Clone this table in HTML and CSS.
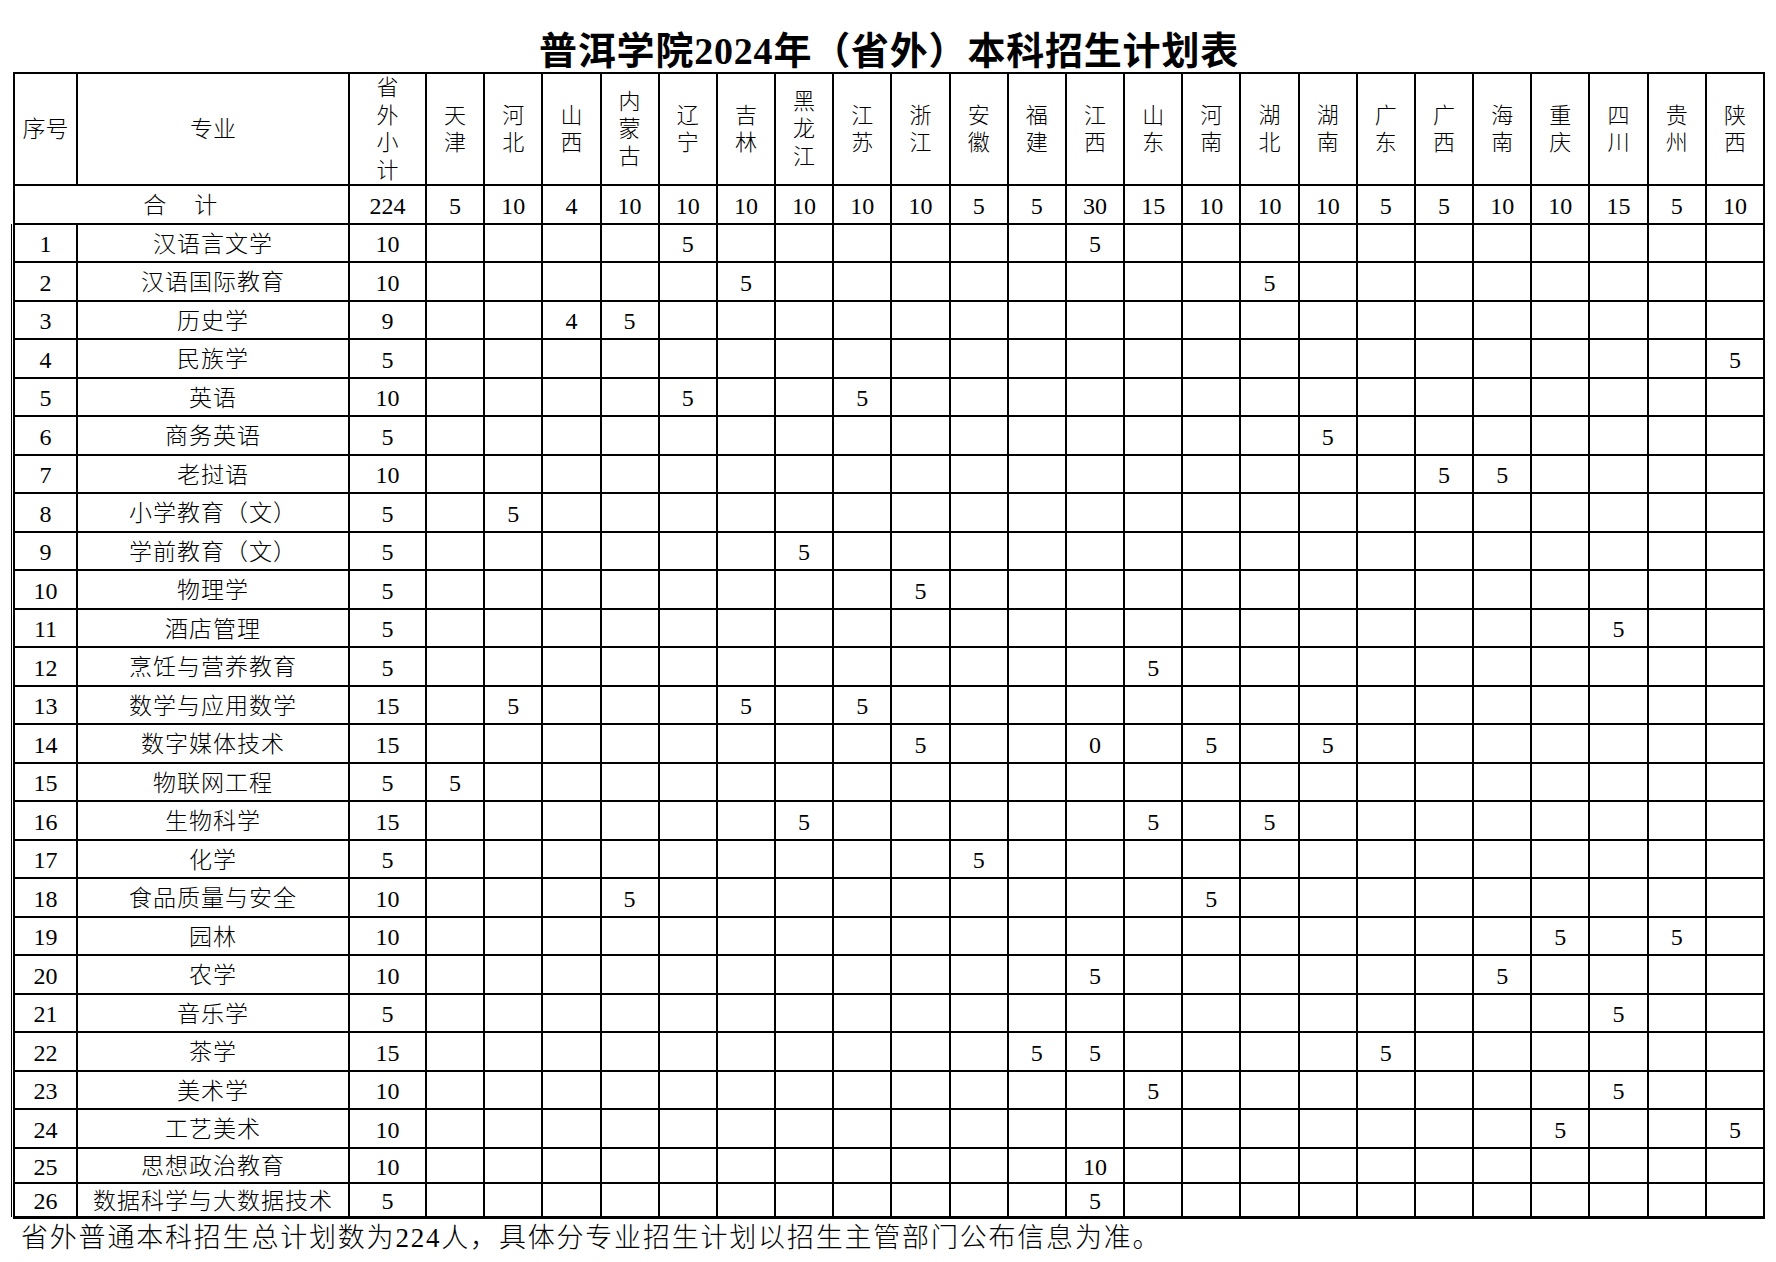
FILE: index.html
```html
<!DOCTYPE html>
<html lang="zh-CN">
<head>
<meta charset="utf-8">
<title>普洱学院2024年（省外）本科招生计划表</title>
<link rel="stylesheet" href="styles.css">
</head>
<body>
<div class="page">
  <h1 class="title">普洱学院2024年（省外）本科招生计划表</h1>
  <table class="plan">
    <colgroup>
      <col class="c-idx"><col class="c-major"><col class="c-sub">
      <col><col><col><col><col><col><col><col><col><col><col><col><col><col><col><col><col><col><col><col><col><col><col>
    </colgroup>
    <thead>
      <tr class="head">
        <th>序号</th>
        <th>专业</th>
        <th><span class="v">省外小计</span></th>
        <th><span class="v">天津</span></th>
        <th><span class="v">河北</span></th>
        <th><span class="v">山西</span></th>
        <th><span class="v">内蒙古</span></th>
        <th><span class="v">辽宁</span></th>
        <th><span class="v">吉林</span></th>
        <th><span class="v">黑龙江</span></th>
        <th><span class="v">江苏</span></th>
        <th><span class="v">浙江</span></th>
        <th><span class="v">安徽</span></th>
        <th><span class="v">福建</span></th>
        <th><span class="v">江西</span></th>
        <th><span class="v">山东</span></th>
        <th><span class="v">河南</span></th>
        <th><span class="v">湖北</span></th>
        <th><span class="v">湖南</span></th>
        <th><span class="v">广东</span></th>
        <th><span class="v">广西</span></th>
        <th><span class="v">海南</span></th>
        <th><span class="v">重庆</span></th>
        <th><span class="v">四川</span></th>
        <th><span class="v">贵州</span></th>
        <th><span class="v">陕西</span></th>
      </tr>
      <tr class="total">
        <td colspan="2" class="sum">合　计</td>
        <td>224</td><td>5</td><td>10</td><td>4</td><td>10</td><td>10</td><td>10</td><td>10</td><td>10</td><td>10</td><td>5</td><td>5</td><td>30</td><td>15</td><td>10</td><td>10</td><td>10</td><td>5</td><td>5</td><td>10</td><td>10</td><td>15</td><td>5</td><td>10</td>
      </tr>
    </thead>
    <tbody>
      <tr><td>1</td><td class="zh">汉语言文学</td><td>10</td><td></td><td></td><td></td><td></td><td>5</td><td></td><td></td><td></td><td></td><td></td><td></td><td>5</td><td></td><td></td><td></td><td></td><td></td><td></td><td></td><td></td><td></td><td></td><td></td></tr>
      <tr><td>2</td><td class="zh">汉语国际教育</td><td>10</td><td></td><td></td><td></td><td></td><td></td><td>5</td><td></td><td></td><td></td><td></td><td></td><td></td><td></td><td></td><td>5</td><td></td><td></td><td></td><td></td><td></td><td></td><td></td><td></td></tr>
      <tr><td>3</td><td class="zh">历史学</td><td>9</td><td></td><td></td><td>4</td><td>5</td><td></td><td></td><td></td><td></td><td></td><td></td><td></td><td></td><td></td><td></td><td></td><td></td><td></td><td></td><td></td><td></td><td></td><td></td><td></td></tr>
      <tr><td>4</td><td class="zh">民族学</td><td>5</td><td></td><td></td><td></td><td></td><td></td><td></td><td></td><td></td><td></td><td></td><td></td><td></td><td></td><td></td><td></td><td></td><td></td><td></td><td></td><td></td><td></td><td></td><td>5</td></tr>
      <tr><td>5</td><td class="zh">英语</td><td>10</td><td></td><td></td><td></td><td></td><td>5</td><td></td><td></td><td>5</td><td></td><td></td><td></td><td></td><td></td><td></td><td></td><td></td><td></td><td></td><td></td><td></td><td></td><td></td><td></td></tr>
      <tr><td>6</td><td class="zh">商务英语</td><td>5</td><td></td><td></td><td></td><td></td><td></td><td></td><td></td><td></td><td></td><td></td><td></td><td></td><td></td><td></td><td></td><td>5</td><td></td><td></td><td></td><td></td><td></td><td></td><td></td></tr>
      <tr><td>7</td><td class="zh">老挝语</td><td>10</td><td></td><td></td><td></td><td></td><td></td><td></td><td></td><td></td><td></td><td></td><td></td><td></td><td></td><td></td><td></td><td></td><td></td><td>5</td><td>5</td><td></td><td></td><td></td><td></td></tr>
      <tr><td>8</td><td class="zh">小学教育（文）</td><td>5</td><td></td><td>5</td><td></td><td></td><td></td><td></td><td></td><td></td><td></td><td></td><td></td><td></td><td></td><td></td><td></td><td></td><td></td><td></td><td></td><td></td><td></td><td></td><td></td></tr>
      <tr><td>9</td><td class="zh">学前教育（文）</td><td>5</td><td></td><td></td><td></td><td></td><td></td><td></td><td>5</td><td></td><td></td><td></td><td></td><td></td><td></td><td></td><td></td><td></td><td></td><td></td><td></td><td></td><td></td><td></td><td></td></tr>
      <tr><td>10</td><td class="zh">物理学</td><td>5</td><td></td><td></td><td></td><td></td><td></td><td></td><td></td><td></td><td>5</td><td></td><td></td><td></td><td></td><td></td><td></td><td></td><td></td><td></td><td></td><td></td><td></td><td></td><td></td></tr>
      <tr><td>11</td><td class="zh">酒店管理</td><td>5</td><td></td><td></td><td></td><td></td><td></td><td></td><td></td><td></td><td></td><td></td><td></td><td></td><td></td><td></td><td></td><td></td><td></td><td></td><td></td><td></td><td>5</td><td></td><td></td></tr>
      <tr><td>12</td><td class="zh">烹饪与营养教育</td><td>5</td><td></td><td></td><td></td><td></td><td></td><td></td><td></td><td></td><td></td><td></td><td></td><td></td><td>5</td><td></td><td></td><td></td><td></td><td></td><td></td><td></td><td></td><td></td><td></td></tr>
      <tr><td>13</td><td class="zh">数学与应用数学</td><td>15</td><td></td><td>5</td><td></td><td></td><td></td><td>5</td><td></td><td>5</td><td></td><td></td><td></td><td></td><td></td><td></td><td></td><td></td><td></td><td></td><td></td><td></td><td></td><td></td><td></td></tr>
      <tr><td>14</td><td class="zh">数字媒体技术</td><td>15</td><td></td><td></td><td></td><td></td><td></td><td></td><td></td><td></td><td>5</td><td></td><td></td><td>0</td><td></td><td>5</td><td></td><td>5</td><td></td><td></td><td></td><td></td><td></td><td></td><td></td></tr>
      <tr><td>15</td><td class="zh">物联网工程</td><td>5</td><td>5</td><td></td><td></td><td></td><td></td><td></td><td></td><td></td><td></td><td></td><td></td><td></td><td></td><td></td><td></td><td></td><td></td><td></td><td></td><td></td><td></td><td></td><td></td></tr>
      <tr><td>16</td><td class="zh">生物科学</td><td>15</td><td></td><td></td><td></td><td></td><td></td><td></td><td>5</td><td></td><td></td><td></td><td></td><td></td><td>5</td><td></td><td>5</td><td></td><td></td><td></td><td></td><td></td><td></td><td></td><td></td></tr>
      <tr><td>17</td><td class="zh">化学</td><td>5</td><td></td><td></td><td></td><td></td><td></td><td></td><td></td><td></td><td></td><td>5</td><td></td><td></td><td></td><td></td><td></td><td></td><td></td><td></td><td></td><td></td><td></td><td></td><td></td></tr>
      <tr><td>18</td><td class="zh">食品质量与安全</td><td>10</td><td></td><td></td><td></td><td>5</td><td></td><td></td><td></td><td></td><td></td><td></td><td></td><td></td><td></td><td>5</td><td></td><td></td><td></td><td></td><td></td><td></td><td></td><td></td><td></td></tr>
      <tr><td>19</td><td class="zh">园林</td><td>10</td><td></td><td></td><td></td><td></td><td></td><td></td><td></td><td></td><td></td><td></td><td></td><td></td><td></td><td></td><td></td><td></td><td></td><td></td><td></td><td>5</td><td></td><td>5</td><td></td></tr>
      <tr><td>20</td><td class="zh">农学</td><td>10</td><td></td><td></td><td></td><td></td><td></td><td></td><td></td><td></td><td></td><td></td><td></td><td>5</td><td></td><td></td><td></td><td></td><td></td><td></td><td>5</td><td></td><td></td><td></td><td></td></tr>
      <tr><td>21</td><td class="zh">音乐学</td><td>5</td><td></td><td></td><td></td><td></td><td></td><td></td><td></td><td></td><td></td><td></td><td></td><td></td><td></td><td></td><td></td><td></td><td></td><td></td><td></td><td></td><td>5</td><td></td><td></td></tr>
      <tr><td>22</td><td class="zh">茶学</td><td>15</td><td></td><td></td><td></td><td></td><td></td><td></td><td></td><td></td><td></td><td></td><td>5</td><td>5</td><td></td><td></td><td></td><td></td><td>5</td><td></td><td></td><td></td><td></td><td></td><td></td></tr>
      <tr><td>23</td><td class="zh">美术学</td><td>10</td><td></td><td></td><td></td><td></td><td></td><td></td><td></td><td></td><td></td><td></td><td></td><td></td><td>5</td><td></td><td></td><td></td><td></td><td></td><td></td><td></td><td>5</td><td></td><td></td></tr>
      <tr><td>24</td><td class="zh">工艺美术</td><td>10</td><td></td><td></td><td></td><td></td><td></td><td></td><td></td><td></td><td></td><td></td><td></td><td></td><td></td><td></td><td></td><td></td><td></td><td></td><td></td><td>5</td><td></td><td></td><td>5</td></tr>
      <tr class="r25"><td>25</td><td class="zh">思想政治教育</td><td>10</td><td></td><td></td><td></td><td></td><td></td><td></td><td></td><td></td><td></td><td></td><td></td><td>10</td><td></td><td></td><td></td><td></td><td></td><td></td><td></td><td></td><td></td><td></td><td></td></tr>
      <tr class="r26"><td>26</td><td class="zh">数据科学与大数据技术</td><td>5</td><td></td><td></td><td></td><td></td><td></td><td></td><td></td><td></td><td></td><td></td><td></td><td>5</td><td></td><td></td><td></td><td></td><td></td><td></td><td></td><td></td><td></td><td></td><td></td></tr>
    </tbody>
  </table>
  <p class="note">省外普通本科招生总计划数为224人，具体分专业招生计划以招生主管部门公布信息为准。</p>
</div>
</body>
</html>
```

FILE: styles.css
```css
* {
  box-sizing: border-box;
}

html, body {
  margin: 0;
  padding: 0;
  background: #ffffff;
}

body {
  font-family: "Liberation Serif", "Noto Sans CJK SC", serif;
  color: #000000;
}

.page {
  padding-left: 13px;
}

.title {
  width: 1752px;
  margin: 0;
  padding-top: 31px;
  height: 72px;
  text-align: center;
  font-size: 38px;
  line-height: 40px;
  font-weight: bold;
  letter-spacing: 0.8px;
}

.plan {
  border-collapse: collapse;
  table-layout: fixed;
  width: 1752px;
}

.c-idx {
  width: 63px;
}

.c-major {
  width: 272px;
}

.c-sub {
  width: 77px;
}

.plan th,
.plan td {
  border: 2px solid #000000;
  padding: 3px 0 0 0;
  text-align: center;
  vertical-align: middle;
  font-weight: normal;
  font-size: 24px;
  line-height: 1;
  white-space: nowrap;
}

.head th {
  height: 112px;
  padding: 0;
  font-size: 23px;
  font-weight: 300;
}

.v {
  display: inline-block;
  width: 1em;
  font-size: 22px;
  line-height: 27.5px;
  white-space: normal;
  word-break: break-all;
}

.total td {
  height: 38.5px;
}

.plan .sum {
  font-size: 23px;
  font-weight: 300;
  letter-spacing: 2.5px;
}

.plan tbody td {
  height: 38.5px;
}

.plan tbody td:first-child {
  box-shadow: -2px 0 0 #ffffff, -3px 0 0 #000000;
}

.plan tbody .r25 td {
  height: 35.5px;
}

.plan tbody .r26 td {
  height: 34px;
  border-bottom-width: 3px;
}

.plan .zh {
  font-size: 23px;
  font-weight: 300;
  letter-spacing: 1px;
}

.note {
  margin: 2px 0 0 8px;
  font-size: 27px;
  font-weight: 300;
  line-height: 34px;
  letter-spacing: 1.8px;
  white-space: nowrap;
}
```
